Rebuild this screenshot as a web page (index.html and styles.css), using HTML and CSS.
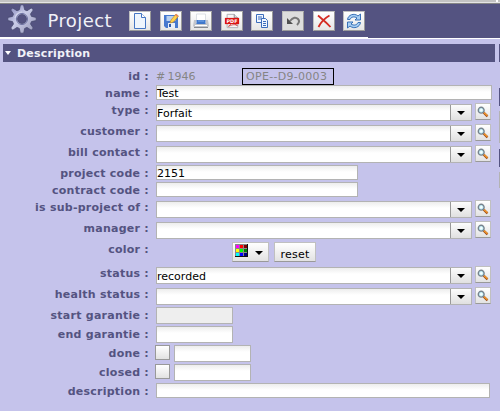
FILE: index.html
```html
<!DOCTYPE html>
<html lang="en">
<head>
<meta charset="utf-8">
<title>Project</title>
<link rel="stylesheet" href="styles.css">
</head>
<body>
<svg width="0" height="0" class="defs">
  <defs>
    <linearGradient id="steel" x1="0" y1="0" x2="1" y2="1"><stop offset="0" stop-color="#7e80b8"/><stop offset=".45" stop-color="#c9cce8"/><stop offset="1" stop-color="#9393b4"/></linearGradient>
    <symbol id="lens" viewBox="0 0 12 12">
      <path d="M6.5 6.5L10.5 10.3" stroke="#9c4a18" stroke-width="2.4"/>
      <path d="M6.8 6.4L10.5 9.8" stroke="#f59a2c" stroke-width="1.3"/>
      <circle cx="4.2" cy="4.2" r="2.9" fill="#c9f3fa" stroke="#77838e" stroke-width="1.4"/>
      <path d="M3 4.2h2.4M4.2 3v2.4" stroke="#fff"/>
    </symbol>
  </defs>
</svg>
<div class="app">
  <div class="splitter"><i></i></div>
  <header class="toolbar">
    <svg class="gear" width="30" height="30" viewBox="0 0 30 30">
      <path fill-rule="evenodd" fill="url(#steel)" stroke="#484a70" stroke-width=".8" d="M13.500 .8h3l1.200 5 2.300 1 4.300-2.900 2 2L23.500 10.100l1 2.300 4.700 1v3.200l-4.700 1-1 2.300 2.800 4.200-2.100 2.100-4.200-2.800-2.300 1-1 4.800h-3.400l-1-4.800-2.300-1-4.200 2.800-2.100-2.100 2.800-4.200-1-2.300-4.700-1v-3.200l4.700-1 1-2.300L3.700 5.900l2-2L10 6.800l2.300-1zM15 10.500a4.500 4.500 0 1 0 0 9a4.500 4.500 0 1 0 0-9z"/>
      <circle cx="15" cy="15" r="5.500" fill="none" stroke="#6b6fa0" stroke-width="1"/>
      <path d="M8 14a7 7 0 0 1 7-6" fill="none" stroke="#e5e8f6" stroke-width="1.200" opacity=".6"/>
    </svg>
    <h1>Project</h1>
    <div class="tools">
      <button><svg viewBox="0 0 16 16"><path d="M2.500 .5h7l4 4v11h-11z" fill="#eef5fd" stroke="#4576c4"/><path d="M9.500 .5v4h4" fill="#fff" stroke="#4576c4"/></svg></button>
      <button><svg viewBox="0 0 16 16"><path d="M1 2h14v13H3l-2-2z" fill="#4779cf"/><path d="M3.500 3h9v5h-9z" fill="#b8d0ee"/><path d="M5 10h7v5H5z" fill="#e8eff9"/><path d="M6 11h2v3H6z" fill="#315ba8"/><path d="M7 10l1-3 5-6 2.500 2-5 6z" fill="#ffd34c" stroke="#c98b28" stroke-width=".7"/><path d="M12.500 1.500l2.200 1.800" stroke="#e98168" stroke-width="1.600"/></svg></button>
      <button><svg viewBox="0 0 16 16"><path d="M3.500 1h9v7h-9z" fill="#fff" stroke="#d4d9df" stroke-width=".8"/><path d="M1 7h2v3h10V7h2l1 6-1 1H1l-1-1z" fill="#c2c5cb"/><path d="M3.500 7h9v4h-9z" fill="#3f78cc"/><path d="M5 8h6" stroke="#79a9e9"/><path d="M2 12.500h12" stroke="#fff"/><path d="M1 14.500h14" stroke="#858a91"/></svg></button>
      <button><svg viewBox="0 0 18 16"><path d="M3.500 .5h8l4 4v11h-12z" fill="#f5f5f6" stroke="#a9a9b0"/><path d="M11.500 .5v4h4" fill="#ddd" stroke="#85858b"/><path d="M5 14c3-2 5-5 5-9 1 5 2 7 5 8-4-2-7 0-10 1" fill="none" stroke="#cf4343"/><path d="M1 4.500h16v7H1z" fill="#db1515"/><text class="pdf" x="9" y="10.500" text-anchor="middle">PDF</text></svg></button>
      <button><svg viewBox="0 0 16 16"><g fill="#f0f6ff" stroke="#3c6dbb"><path d="M2.500 1.500h7v8h-7z"/><path d="M4 4h4M4 6h4"/><path d="M7.500 5.500h4l2 2v7h-6z"/><path d="M9 8.500h3M9 10.500h3M9 12.500h3"/></g></svg></button>
      <button class="off"><svg viewBox="0 0 16 16"><path d="M5 8C8 4 11 4 13 6s1 4-1 6" fill="none" stroke="#777" stroke-width="2"/><path d="M2 5v6h6z" fill="#505050"/></svg></button>
      <button><svg viewBox="0 0 16 16"><path d="M2 2.500C6 6 10 9 14.500 14M13.500 2.500C9 5 5 9 2.500 14" fill="none" stroke="#d42b22" stroke-width="1.800"/></svg></button>
      <button><svg viewBox="0 0 16 16"><g fill="#a8cff4" stroke="#2864b0" stroke-width=".9"><path d="M1.500 6.500C2 2 8-.5 12 3l2.500-2v6H9l2-2C8 3 5 4 4 6.500z"/><path d="M14.500 9.500C14 14 8 16.500 4 13l-2.500 2V9H7l-2 2c3 2 6 1 7-1.500z"/></g></svg></button>
    </div>
  </header>
  <div class="rule"><i></i></div>
  <div class="titles"><h2><i class="fold"></i>Description</h2><i class="next"></i></div>
  <main>
    <form class="form">
      <div class="row id"><label>id&nbsp;:</label><div class="field"><span class="num">#&thinsp;1946</span><span class="ref">OPE--D9-0003</span></div></div>
      <div class="row h19"><label>name&nbsp;:</label><div class="field"><span class="box long">Test</span></div></div>
      <div class="row pick h21"><label>type&nbsp;:</label><div class="field"><span class="box combo">Forfait<i></i></span><span class="find"><svg><use href="#lens"/></svg></span></div></div>
      <div class="row pick h21"><label>customer&nbsp;:</label><div class="field"><span class="box combo"><i></i></span><span class="find"><svg><use href="#lens"/></svg></span></div></div>
      <div class="row pick h19"><label>bill contact&nbsp;:</label><div class="field"><span class="box combo"><i></i></span><span class="find"><svg><use href="#lens"/></svg></span></div></div>
      <div class="row h17"><label>project code&nbsp;:</label><div class="field"><span class="box code">2151</span></div></div>
      <div class="row h19"><label>contract code&nbsp;:</label><div class="field"><span class="box code"></span></div></div>
      <div class="row pick h21"><label>is sub-project of&nbsp;:</label><div class="field"><span class="box combo"><i></i></span><span class="find"><svg><use href="#lens"/></svg></span></div></div>
      <div class="row pick h20"><label>manager&nbsp;:</label><div class="field"><span class="box combo"><i></i></span><span class="find"><svg><use href="#lens"/></svg></span></div></div>
      <div class="row color"><label>color&nbsp;:</label><div class="field"><span class="btn swatch"><svg width="13" height="13" viewBox="0 0 13 13" shape-rendering="crispEdges"><path d="M0 0h13v13H0z" fill="#888"/><path d="M12 0h1v13H0v-1h12z" fill="#111"/><path d="M1 1h3v3H1z" fill="#f0f"/><path d="M5 1h3v3H5z" fill="#f00"/><path d="M9 1h3v3H9z" fill="#800000"/><path d="M1 5h3v3H1z" fill="#ff0"/><path d="M5 5h3v3H5z" fill="#0f0"/><path d="M9 5h3v3H9z" fill="#008000"/><path d="M1 9h3v3H1z" fill="#0ff"/><path d="M5 9h3v3H5z" fill="#00f"/><path d="M9 9h3v3H9z" fill="#000080"/></svg><i></i></span><span class="btn reset">reset</span></div></div>
      <div class="row pick h21"><label>status&nbsp;:</label><div class="field"><span class="box combo">recorded<i></i></span><span class="find"><svg><use href="#lens"/></svg></span></div></div>
      <div class="row pick h19"><label>health status&nbsp;:</label><div class="field"><span class="box combo"><i></i></span><span class="find"><svg><use href="#lens"/></svg></span></div></div>
      <div class="row h19"><label>start garantie&nbsp;:</label><div class="field"><span class="box date locked"></span></div></div>
      <div class="row h19"><label>end garantie&nbsp;:</label><div class="field"><span class="box date"></span></div></div>
      <div class="row h19"><label>done&nbsp;:</label><div class="field"><span class="check"></span><span class="box date"></span></div></div>
      <div class="row h19"><label>closed&nbsp;:</label><div class="field"><span class="check"></span><span class="box date"></span></div></div>
      <div class="row h19"><label>description&nbsp;:</label><div class="field"><span class="box desc"></span></div></div>
    </form>
    <aside><i class="head"></i><i class="pane"></i><i class="head"></i><i class="pane last"></i></aside>
  </main>
</div>
</body>
</html>
```

FILE: styles.css
```css
* { box-sizing: border-box; }
body { margin: 0; background: #fff; font: 11px/15px "DejaVu Sans", sans-serif; overflow: hidden; }
.defs { position: absolute; }
.app { width: 500px; height: 411px; background: #c5c3eb; display: flex; flex-direction: column; }
.splitter { height: 4px; flex: none; background: linear-gradient(#c2c2c2 0 2px, #e4e4e4 2px 3px, #858585 3px); }
.splitter i { display: block; width: 2px; height: 2px; margin-left: 496px; background: #fff; }
.toolbar { height: 33px; flex: none; background: #545381; display: flex; align-items: flex-start; padding-left: 7px; }
.gear { flex: none; }
h1 { margin: 5px 0 0 10.5px; width: 80.5px; flex: none; color: #f1f1f8; font: 18px/23px "DejaVu Sans", sans-serif; letter-spacing: .4px; white-space: nowrap; }
.tools { display: flex; gap: 8.6px; margin: 7px 0 0 1px; }
.toolbar button { width: 22px; height: 20px; padding: 0; border: 1px solid #c0c0c0; border-right-color: #999; border-bottom-color: #999; background: linear-gradient(#fff, #e6e6e6); display: flex; align-items: center; justify-content: center; }
.toolbar button.off { background: #ddd; }
.toolbar button svg { width: 16px; height: 16px; flex: none; }
.pdf { font: bold 5.500px "DejaVu Sans", sans-serif; fill: #fff; }
.rule { height: 2px; flex: none; background: #fff; }
.rule i { display: block; height: 1px; margin-left: 368px; background: #545381; }
.titles { height: 23px; flex: none; padding: 5px 0 0 3px; display: flex; gap: 4px; }
h2 { width: 492px; height: 18px; margin: 0; padding-left: 2px; background: #545381; color: #f1f1f8; font: bold 11px/19px "DejaVu Sans", sans-serif; letter-spacing: .2px; display: flex; align-items: flex-start; }
.fold { border: 3.500px solid transparent; border-top: 4px solid #fff; border-bottom: 0; margin: 7px 6px 0 0; }
.next { width: 1px; height: 18px; background: #545381; }
main { display: flex; flex: 1; min-height: 0; }
.form { width: 499px; }
.row { display: flex; }
.row label { width: 149px; flex: none; margin-right: 7px; margin-top: 1px; text-align: right; color: #545381; font-weight: bold; letter-spacing: .25px; white-space: nowrap; }
.row.pick label { margin-top: -1px; }
.row.id { height: 23px; padding-top: 6px; }
.row.color { height: 25px; }
.row.color label { margin-top: 0; }
.h17 { height: 17px; } .h19 { height: 19px; } .h20 { height: 20px; } .h21 { height: 21px; }
.field { display: flex; align-items: flex-start; white-space: nowrap; }
.num { width: 86px; padding-top: 1px; color: #858585; }
.ref { height: 17px; width: 92px; border: 1px solid #000; padding-left: 3px; color: #858585; letter-spacing: .3px; }
.box { height: 15px; flex: none; border: 1px solid #b3b3b3; background: linear-gradient(#ededed, #fff 6px); color: #000; }
.long { width: 336px; }
.code { width: 202px; }
.desc { width: 334px; }
.date { width: 77px; height: 17px; }
.locked { background: #eee; }
.combo { width: 316px; height: 17px; line-height: 17px; display: flex; align-items: flex-start; }
.combo i { width: 21px; height: 15px; margin-left: auto; border-left: 1px solid #999; background: linear-gradient(#fcfcfc, #e0e0e0); display: flex; align-items: center; justify-content: center; }
.combo i::after, .swatch i { content: ""; border: 4px solid transparent; border-top-color: #000; border-bottom: 0; }
.find { width: 16px; height: 17px; margin: -1px 0 0 3px; border: 1px solid #c0c0c0; border-bottom-color: #999; background: linear-gradient(#fff, #e2e2e2); display: flex; align-items: center; justify-content: center; }
.find svg { width: 12px; height: 12px; }
.btn { height: 20px; border: 1px solid #c0c0c0; border-bottom-color: #999; background: linear-gradient(#fff, #e2e2e2); }
.swatch { width: 37px; margin-left: 76px; display: flex; padding: 1px 0 0 2px; }
.swatch i { margin: 7px 0 0 7px; height: 4px; }
.reset { width: 42px; margin-left: 5px; text-align: center; line-height: 23px; letter-spacing: .2px; }
.check { width: 15px; height: 15px; margin: 0 4px 0 -1px; border: 1px solid #999; background: linear-gradient(#fff, #e2e2e2); }
aside { width: 1px; padding-top: 26px; }
aside i { display: block; width: 1px; }
.head { height: 18px; background: #545381; }
.pane { height: 32px; margin: 5px 0 6px; background: #b3b3b3; }
.last { height: 16px; margin-bottom: 0; }
```
